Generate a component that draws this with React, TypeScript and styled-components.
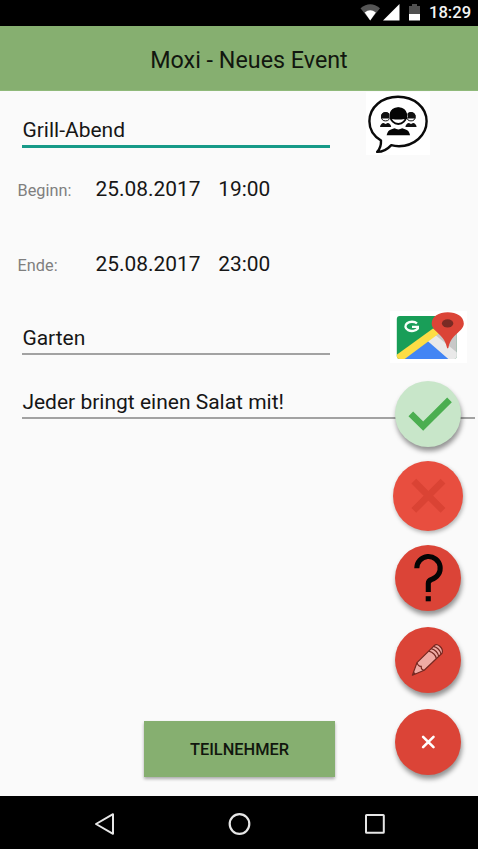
import React from "react";
import styled, { createGlobalStyle } from "styled-components";

const GlobalStyle = createGlobalStyle`
  * { box-sizing: border-box; }
  body { margin: 0; background: #fafafa; font-family: Roboto, "Liberation Sans", sans-serif; }
  svg { display: block; }
`;

const Screen = styled.div`
  width: 478px;
  height: 849px;
  display: flex;
  flex-direction: column;
  overflow: hidden;
  background: #fafafa;
  color: #161616;
`;

const StatusBar = styled.header`
  height: 26px;
  flex: none;
  display: flex;
  align-items: center;
  justify-content: flex-end;
  padding-right: 7px;
  background: #000;
`;

const Clock = styled.span`
  margin-left: 8px;
  width: 42px;
  color: #f4f4f4;
  font-size: 16.6px;
  font-weight: 500;
  line-height: 26px;
  white-space: nowrap;
`;

const AppBar = styled.div`
  height: 65px;
  flex: none;
  display: flex;
  align-items: center;
  justify-content: center;
  padding: 4px 0 0 20px;
  background: #86af70;
  border-bottom: 1px solid #8fb97a;
`;

const Title = styled.h1`
  margin: 0;
  font-size: 23.3px;
  font-weight: 400;
  line-height: 28px;
  color: #12170f;
`;

const Content = styled.main`
  position: relative;
  height: 705px;
  flex: none;
  display: flex;
  flex-direction: column;
`;

const FieldRow = styled.div<{ $height: number }>`
  height: ${(p) => p.$height}px;
  flex: none;
  display: flex;
  align-items: flex-start;
  padding-left: 22.4px;
`;

const Field = styled.div<{ $width: number; $height: number; $active?: boolean }>`
  width: ${(p) => p.$width}px;
  height: ${(p) => p.$height}px;
  flex: none;
  display: flex;
  align-items: flex-end;
  padding-bottom: 3px;
  border-bottom: ${(p) => (p.$active ? "3px solid #179a88" : "2px solid #a2a2a2")};
  font-size: 21px;
  line-height: 24px;
  white-space: nowrap;
`;

const Thumb = styled.div<{ $left: number; $top: number; $w: number; $h: number }>`
  width: ${(p) => p.$w}px;
  height: ${(p) => p.$h}px;
  flex: none;
  margin: ${(p) => p.$top}px 0 0 ${(p) => p.$left}px;
  background: #fff;
`;

const DateRow = styled.div<{ $height: number }>`
  height: ${(p) => p.$height}px;
  flex: none;
  display: grid;
  grid-template-columns: 78px 122.6px auto;
  align-items: center;
  padding-left: 17.6px;
`;

const Label = styled.span`
  padding-top: 4px;
  font-size: 16.3px;
  line-height: 20px;
  color: #7f7f7f;
`;

const DateValue = styled.span`
  font-size: 20.9px;
  line-height: 24px;
`;

const Action = styled.button`
  width: 191px;
  height: 56px;
  margin: auto 0 19px 144px;
  padding: 2px 0 0;
  border: 0;
  background: #86af70;
  box-shadow: 0 2px 3px rgba(0, 0, 0, 0.32);
  color: #11170e;
  font: 500 16.4px/20px Roboto, sans-serif;
`;

const FabStack = styled.div`
  position: absolute;
  top: 290px;
  right: 15px;
  display: flex;
  flex-direction: column;
  align-items: center;
  gap: 16px;
`;

const Fab = styled.button<{ $color: string; $large?: boolean }>`
  width: ${(p) => (p.$large ? 70 : 66)}px;
  height: ${(p) => (p.$large ? 70 : 66)}px;
  margin: ${(p) => (p.$large ? "-2px 0" : "0 2px")};
  padding: 0;
  border: 0;
  border-radius: 50%;
  display: flex;
  align-items: center;
  justify-content: center;
  background: ${(p) => p.$color};
  box-shadow: ${(p) =>
    p.$large ? "1px 2px 4px rgba(0,0,0,0.3)" : "1px 4px 5px rgba(0,0,0,0.42)"};
`;

const NavBar = styled.nav`
  height: 53px;
  flex: none;
  display: flex;
  align-items: center;
  justify-content: space-between;
  padding: 3px 92px 0 94px;
  background: #000;
`;

const StatusIcons = () => (
  <svg width="62" height="26" viewBox="0 0 62 26">
    <path d="M1.5 8.2Q11.2 0.5 21 8.2L11.2 20.5Z" fill="#555" />
    <path d="M5.7 12.6Q11.2 8 16.8 12.6L11.2 20.5Z" fill="#fff" />
    <path d="M40.5 4V20.5H24Z" fill="#fff" />
    <path d="M50 6H53V4H58V6H61V14H50Z" fill="#505050" />
    <path d="M50 14H61V20.5H50Z" fill="#fff" />
  </svg>
);

const GroupChatIcon = () => (
  <svg width="64" height="63" viewBox="0 0 64 63">
    <path
      d="M32 4.8C48 4.8 60.6 15.2 60.6 29.3C60.6 43.5 48 54 33 54.2C29.8 54.2 27.5 53.8 25.3 53.1C21.5 57.2 16.8 60 11.2 59.9C14.2 56.7 15.2 53.3 15 48.5C7.7 44.2 3.4 37.5 3.4 29.3C3.4 15.2 16 4.8 32 4.8Z"
      fill="#fff" stroke="#0a0a0a" strokeWidth="2.4" strokeLinejoin="round"
    />
    {[19.6, 45].map((x) => (
      <g key={x}>
        <circle cx={x} cy="24.8" r="4.1" fill="#fff" stroke="#111" strokeWidth="1" />
        <path d={`M${x - 4.5} 26.6V23.5Q${x - 3.7} 20 ${x} 20T${x + 4.5} 23.5V26.6Z`} fill="#111" />
        <path d={`M${x - 5.6} 35Q${x - 5} 31.3 ${x - 2} 31L${x} 32L${x + 2} 31Q${x + 5} 31.3 ${x + 5.6} 35Z`} fill="#111" />
      </g>
    ))}
    <circle cx="32.3" cy="24.2" r="9.3" fill="#fff" />
    <circle cx="32.3" cy="24.2" r="7.8" fill="#fff" stroke="#080808" strokeWidth="1.8" />
    <path d="M23.6 27V22Q25 15.3 32.3 15.3T41 22V27H38.5Q32 28.2 26 27Z" fill="#050505" />
    <path d="M20.6 43.3Q21.8 38 25.6 37.3L28.5 36.3Q32.3 38.5 36.2 36.3L39 37.3Q43 38 44.1 43.3Z" fill="#050505" />
  </svg>
);

const MapIcon = () => (
  <svg width="77" height="52" viewBox="0 0 77 52">
    <defs>
      <clipPath id="mapShape"><rect x="6.8" y="5" width="60" height="43" rx="3" /></clipPath>
    </defs>
    <g clipPath="url(#mapShape)">
      <rect x="6" y="5" width="62" height="44" fill="#199e58" />
      <path d="M38 31L58 12L68 8V49H38Z" fill="#c8c8c8" />
      <path d="M38 29L60 49H12Z" fill="#4285f4" />
      <path d="M37.3 29.8L45 23.8L69 43V49H59.5Z" fill="#e9e9e9" />
      <path d="M5 45L43 17.5L51 21L12 50H5Z" fill="#fddd45" />
    </g>
    <path d="M27 12.4A6.6 4.6 0 1 0 27.8 17.6V15.9H22" fill="none" stroke="#f8fff9" strokeWidth="2.4" />
    <path d="M57.7 1.3C66.6 1.3 73.8 5.6 73.8 12.4C73.8 20.3 61 23.1 58.6 36C58.4 37.9 57.1 37.9 56.8 36C54.4 23.1 41.7 20.3 41.7 12.4C41.7 5.6 48.8 1.3 57.7 1.3Z" fill="#db4437" />
    <ellipse cx="57.6" cy="12.4" rx="5.7" ry="4.1" fill="#792b24" />
  </svg>
);

const CheckIcon = () => (
  <svg width="66" height="66" viewBox="0 0 66 66">
    <path d="M15.8 32.8L28.2 45.2L54.5 18.9" fill="none" stroke="#4bae50" strokeWidth="6.6" />
  </svg>
);

const RejectIcon = () => (
  <svg width="70" height="70" viewBox="0 0 70 70">
    <path d="M20.8 20.2L50 49.4M50 20.2L20.8 49.4" stroke="#da4334" strokeWidth="6.8" />
  </svg>
);

const QuestionIcon = () => (
  <svg width="66" height="66" viewBox="0 0 66 66">
    <path d="M21.8 23.2A11.7 11.7 0 1 1 36.5 34.5Q33.3 35.6 33.3 38.4V47" fill="none" stroke="#050505" strokeWidth="5.1" />
    <rect x="30.7" y="51.2" width="5.1" height="5.1" fill="#050505" />
  </svg>
);

const PencilIcon = () => (
  <svg width="66" height="66" viewBox="0 0 66 66">
    <path d="M17.4 48.2L22 35.6L39.5 18.4C42.5 15.4 49 21.8 47 26.2L29.2 43.3Z" fill="#efaaa4" stroke="#762720" strokeWidth="1.2" strokeLinejoin="round" />
    <path d="M22 35.6Q23.2 39.6 26.2 39.3Q26 43 29.2 43.3M33.8 24.1Q40.2 25.9 41.5 31.8M36.2 21.7Q42.4 23.5 43.8 29.5M38.5 19.4Q44.8 21.2 46 27.2" fill="none" stroke="#762720" strokeWidth="1.2" />
    <path d="M17.4 48.2L18.8 44.8L20.8 46.8Z" fill="#762720" />
  </svg>
);

const CloseIcon = () => (
  <svg width="66" height="66" viewBox="0 0 66 66">
    <path d="M28.1 27.8L38.5 38.2M38.5 27.8L28.1 38.2" stroke="#fff" strokeWidth="2.6" strokeLinecap="round" />
  </svg>
);

const dates = [
  { label: "Beginn:", date: "25.08.2017", time: "19:00", height: 66 },
  { label: "Ende:", date: "25.08.2017", time: "23:00", height: 84 },
];

export default function App() {
  return (
    <Screen>
      <GlobalStyle />
      <StatusBar>
        <StatusIcons />
        <Clock>18:29</Clock>
      </StatusBar>
      <AppBar>
        <Title>Moxi - Neues Event</Title>
      </AppBar>
      <Content>
        <FieldRow $height={65}>
          <Field $width={307.6} $height={57} $active>Grill-Abend</Field>
          <Thumb $left={36} $top={1} $w={64} $h={63}><GroupChatIcon /></Thumb>
        </FieldRow>
        {dates.map((d) => (
          <DateRow key={d.label} $height={d.height}>
            <Label>{d.label}</Label>
            <DateValue>{d.date}</DateValue>
            <DateValue>{d.time}</DateValue>
          </DateRow>
        ))}
        <FieldRow $height={63}>
          <Field $width={307.6} $height={49}>Garten</Field>
          <Thumb $left={60} $top={5} $w={77} $h={52}><MapIcon /></Thumb>
        </FieldRow>
        <FieldRow $height={50}>
          <Field $width={452.6} $height={50}>Jeder bringt einen Salat mit!</Field>
        </FieldRow>
        <Action>TEILNEHMER</Action>
        <FabStack>
          <Fab $color="#c8e6c9" aria-label="Zusagen"><CheckIcon /></Fab>
          <Fab $color="#e84e3f" $large aria-label="Absagen"><RejectIcon /></Fab>
          <Fab $color="#db4437" aria-label="Unsicher"><QuestionIcon /></Fab>
          <Fab $color="#db4437" aria-label="Bearbeiten"><PencilIcon /></Fab>
          <Fab $color="#db4437" aria-label="Schließen"><CloseIcon /></Fab>
        </FabStack>
      </Content>
      <NavBar>
        <svg width="21" height="24" viewBox="0 0 21 24">
          <path d="M2 12L19 2.2V21.8Z" fill="none" stroke="#e6e6e6" strokeWidth="2" strokeLinejoin="round" />
        </svg>
        <svg width="24" height="24" viewBox="0 0 24 24">
          <circle cx="11.5" cy="12" r="9.8" fill="none" stroke="#e6e6e6" strokeWidth="2.2" />
        </svg>
        <svg width="22" height="22" viewBox="0 0 22 22">
          <rect x="2" y="2" width="17.8" height="17.8" rx="0.6" fill="none" stroke="#e6e6e6" strokeWidth="2" />
        </svg>
      </NavBar>
    </Screen>
  );
}
